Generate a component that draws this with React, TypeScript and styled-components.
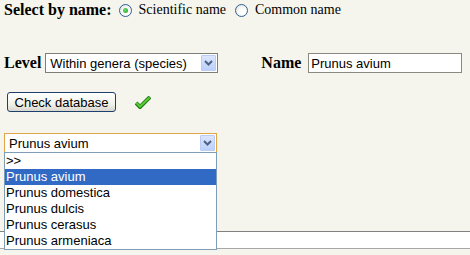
import styled, { createGlobalStyle } from 'styled-components';

const GlobalStyle = createGlobalStyle`
    html, body {
        margin: 0;
        padding: 0;
        background: #f5f5ed;
        overflow: hidden;
    }
    body {
        font-family: "Liberation Serif", "Times New Roman", serif;
        font-size: 14px;
        color: #000;
    }
`

const Page = styled.div`
    position: relative;
    height: 255px;
    overflow: hidden;
`

const Row = styled.div<{ $top: number; $left?: number }>`
    display: flex;
    align-items: center;
    height: 20px;
    margin-top: ${p => p.$top}px;
    padding-left: ${p => p.$left ?? 4}px;
`

const Label = styled.span<{ $gap?: number; $before?: number }>`
    font-weight: bold;
    font-size: 16px;
    white-space: nowrap;
    margin-left: ${p => p.$before ?? 0}px;
    margin-right: ${p => p.$gap ?? 4}px;
`

const RadioLabel = styled.label<{ $gap: number }>`
    display: flex;
    align-items: center;
    margin-right: ${p => p.$gap}px;
    white-space: nowrap;
`

const RadioDot = styled.span<{ $checked?: boolean }>`
    box-sizing: border-box;
    width: 13px;
    height: 13px;
    border-radius: 50%;
    border: 1px solid #2f5f8f;
    background: radial-gradient(circle at 60% 60%, #ffffff 30%, #dcdcd6 100%);
    margin-right: 7px;
    display: flex;
    align-items: center;
    justify-content: center;
    &::after {
        content: '';
        display: ${p => (p.$checked ? 'block' : 'none')};
        width: 5px;
        height: 5px;
        border-radius: 50%;
        background: radial-gradient(circle at 40% 40%, #6ee06e, #1f9a1f);
    }
`

const SelectBox = styled.div<{ $width: number; $focus?: boolean }>`
    box-sizing: border-box;
    width: ${p => p.$width}px;
    height: 20px;
    border: 1px solid ${p => (p.$focus ? '#e0a547' : '#7f7f78')};
    background: #fff;
    display: flex;
    align-items: center;
    padding: 1px;
    font-family: "Liberation Sans", Tahoma, sans-serif;
    font-size: 13px;
`

const SelectText = styled.span`
    flex: 1;
    padding-left: 3px;
    white-space: nowrap;
    overflow: hidden;
`

const ArrowButton = styled.span`
    box-sizing: border-box;
    width: 15px;
    height: 16px;
    border: 1px solid #b9cdf6;
    border-radius: 1px;
    background: linear-gradient(#dbe6fe, #bcd0fb);
    display: flex;
    align-items: center;
    justify-content: center;
`

const TextInput = styled.div`
    box-sizing: border-box;
    width: 154px;
    height: 20px;
    border: 1px solid #8a8a80;
    background: #fff;
    padding-left: 2px;
    display: flex;
    align-items: center;
    font-family: "Liberation Sans", Tahoma, sans-serif;
    font-size: 13px;
`

const Button = styled.button`
    box-sizing: border-box;
    height: 20px;
    width: 109px;
    padding: 0;
    border: 1px solid #1f3f6f;
    border-radius: 3px;
    background: linear-gradient(#ffffff, #f2f2ec 60%, #d8d6cc);
    font-family: "Liberation Sans", Tahoma, sans-serif;
    font-size: 13px;
    color: #000;
    margin-right: 19px;
`

const DropdownList = styled.ul`
    position: absolute;
    left: 4px;
    top: 152px;
    width: 213px;
    box-sizing: border-box;
    margin: 0;
    padding: 0;
    list-style: none;
    background: #fff;
    border: 1px solid #7f9db9;
    z-index: 2;
    font-family: "Liberation Sans", Tahoma, sans-serif;
    font-size: 13px;
`

const Option = styled.li<{ $selected?: boolean }>`
    height: 16px;
    line-height: 16px;
    padding-left: 1px;
    background: ${p => (p.$selected ? '#316ac5' : 'transparent')};
    color: ${p => (p.$selected ? '#fff' : '#000')};
`

const Footer = styled.div`
    margin-top: 78px;
    height: 16px;
    border-top: 1px solid #808080;
    border-bottom: 1px solid #a7a7a7;
    background: #fff;
`

const FooterText = styled.div`
    text-align: center;
    font-size: 13px;
    line-height: 13px;
    padding-top: 4px;
`

const Chevron = () => (
    <svg width="9" height="6" viewBox="0 0 9 6">
        <path d="M1 1 L4.5 4.5 L8 1" fill="none" stroke="#4d6185" strokeWidth="2" />
    </svg>
)

const CheckMark = () => (
    <svg width="16" height="13" viewBox="0 0 16 13">
        <path d="M1 7 L5 11 L15 1" fill="none" stroke="#1d7d12" strokeWidth="4" strokeLinejoin="miter" />
        <path d="M1.5 7 L5 10.5 L14.5 1.5" fill="none" stroke="#5ecb3a" strokeWidth="2" />
    </svg>
)

const options = ['>>', 'Prunus avium', 'Prunus domestica', 'Prunus dulcis', 'Prunus cerasus', 'Prunus armeniaca']

const App = () => (
    <Page>
        <GlobalStyle />
        <Row $top={0}>
            <Label $gap={7}>Select by name:</Label>
            <RadioLabel $gap={9}><RadioDot $checked />Scientific name</RadioLabel>
            <RadioLabel $gap={0}><RadioDot />Common name</RadioLabel>
        </Row>
        <Row $top={33}>
            <Label>Level</Label>
            <SelectBox $width={173}>
                <SelectText>Within genera (species)</SelectText>
                <ArrowButton><Chevron /></ArrowButton>
            </SelectBox>
            <Label $gap={7} $before={43}>Name</Label>
            <TextInput>Prunus avium</TextInput>
        </Row>
        <Row $top={19} $left={7}>
            <Button>Check database</Button>
            <CheckMark />
        </Row>
        <Row $top={21}>
            <SelectBox $width={213} $focus>
                <SelectText>Prunus avium</SelectText>
                <ArrowButton><Chevron /></ArrowButton>
            </SelectBox>
        </Row>
        <DropdownList>
            {options.map((o, i) => <Option key={o} $selected={i === 1}>{o}</Option>)}
        </DropdownList>
        <Footer />
        <FooterText>Evaluated species 2008</FooterText>
    </Page>
)

export default App;
